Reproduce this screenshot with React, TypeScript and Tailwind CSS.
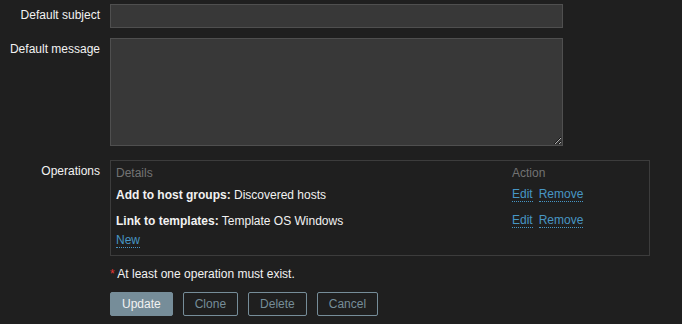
import React from "react";

const font = { fontFamily: '"Liberation Sans", Arial, sans-serif' };

const FormRow: React.FC<{ label: string; className?: string; children: React.ReactNode }> = ({
  label,
  className,
  children,
}) => (
  <div className={"flex " + (className ?? "")}>
    <div className="w-[100px] shrink-0 pt-[4px] text-right text-[12px] leading-[14px] text-[#f2f2f2]">
      {label}
    </div>
    <div className="ml-[10px]">{children}</div>
  </div>
);

const ActionLinks = () => (
  <div className="flex gap-[6px] text-[#4796c4]">
    <span className="border-b border-dotted border-[#4796c4] leading-[13px] cursor-pointer">Edit</span>
    <span className="border-b border-dotted border-[#4796c4] leading-[13px] cursor-pointer">Remove</span>
  </div>
);

export default function App() {
  return (
    <div className="min-h-screen bg-[#1f1f1f] pt-[4px]" style={font}>
      <FormRow label="Default subject">
        <input
          type="text"
          className="block h-[24px] w-[453px] border border-[#4f4f4f] bg-[#383838] px-[5px] text-[12px] text-[#f2f2f2] outline-none"
        />
      </FormRow>

      <FormRow label="Default message" className="mt-[10px]">
        <textarea className="block h-[108px] w-[453px] border border-[#4f4f4f] bg-[#383838] px-[5px] py-[4px] text-[12px] text-[#f2f2f2] outline-none [color-scheme:dark]" />
      </FormRow>

      <FormRow label="Operations" className="mt-[14px]">
        <div className="h-[96px] w-[540px] border border-[#3c3c3c] pl-[5px] text-[12px] leading-[14px] text-[#f2f2f2]">
          <div className="grid h-[24px] grid-cols-[396px_1fr] items-center text-[#737373]">
            <span>Details</span>
            <span>Action</span>
          </div>
          <div className="grid h-[20px] grid-cols-[396px_1fr] items-center">
            <span>
              <b>Add to host groups:</b> Discovered hosts
            </span>
            <ActionLinks />
          </div>
          <div className="mt-[6px] grid h-[20px] grid-cols-[396px_1fr] items-center">
            <span>
              <b>Link to templates:</b> Template OS Windows
            </span>
            <ActionLinks />
          </div>
          <div className="flex h-[20px] items-center">
            <span className="border-b border-dotted border-[#4796c4] leading-[13px] text-[#4796c4] cursor-pointer">
              New
            </span>
          </div>
        </div>
      </FormRow>

      <div className="ml-[110px] mt-[11px] text-[12px] leading-[14px] text-[#f2f2f2]">
        <span className="text-[#e33734]">*</span> At least one operation must exist.
      </div>

      <div className="ml-[110px] mt-[11px] flex gap-[10px] text-[12px]">
        <button className="h-[24px] rounded-[2px] border border-[#768d99] bg-[#768d99] px-[11px] text-[#f2f2f2]">
          Update
        </button>
        <button className="h-[24px] rounded-[2px] border border-[#768d99] px-[11px] text-[#768d99]">
          Clone
        </button>
        <button className="h-[24px] rounded-[2px] border border-[#768d99] px-[11px] text-[#768d99]">
          Delete
        </button>
        <button className="h-[24px] rounded-[2px] border border-[#768d99] px-[11px] text-[#768d99]">
          Cancel
        </button>
      </div>
    </div>
  );
}
